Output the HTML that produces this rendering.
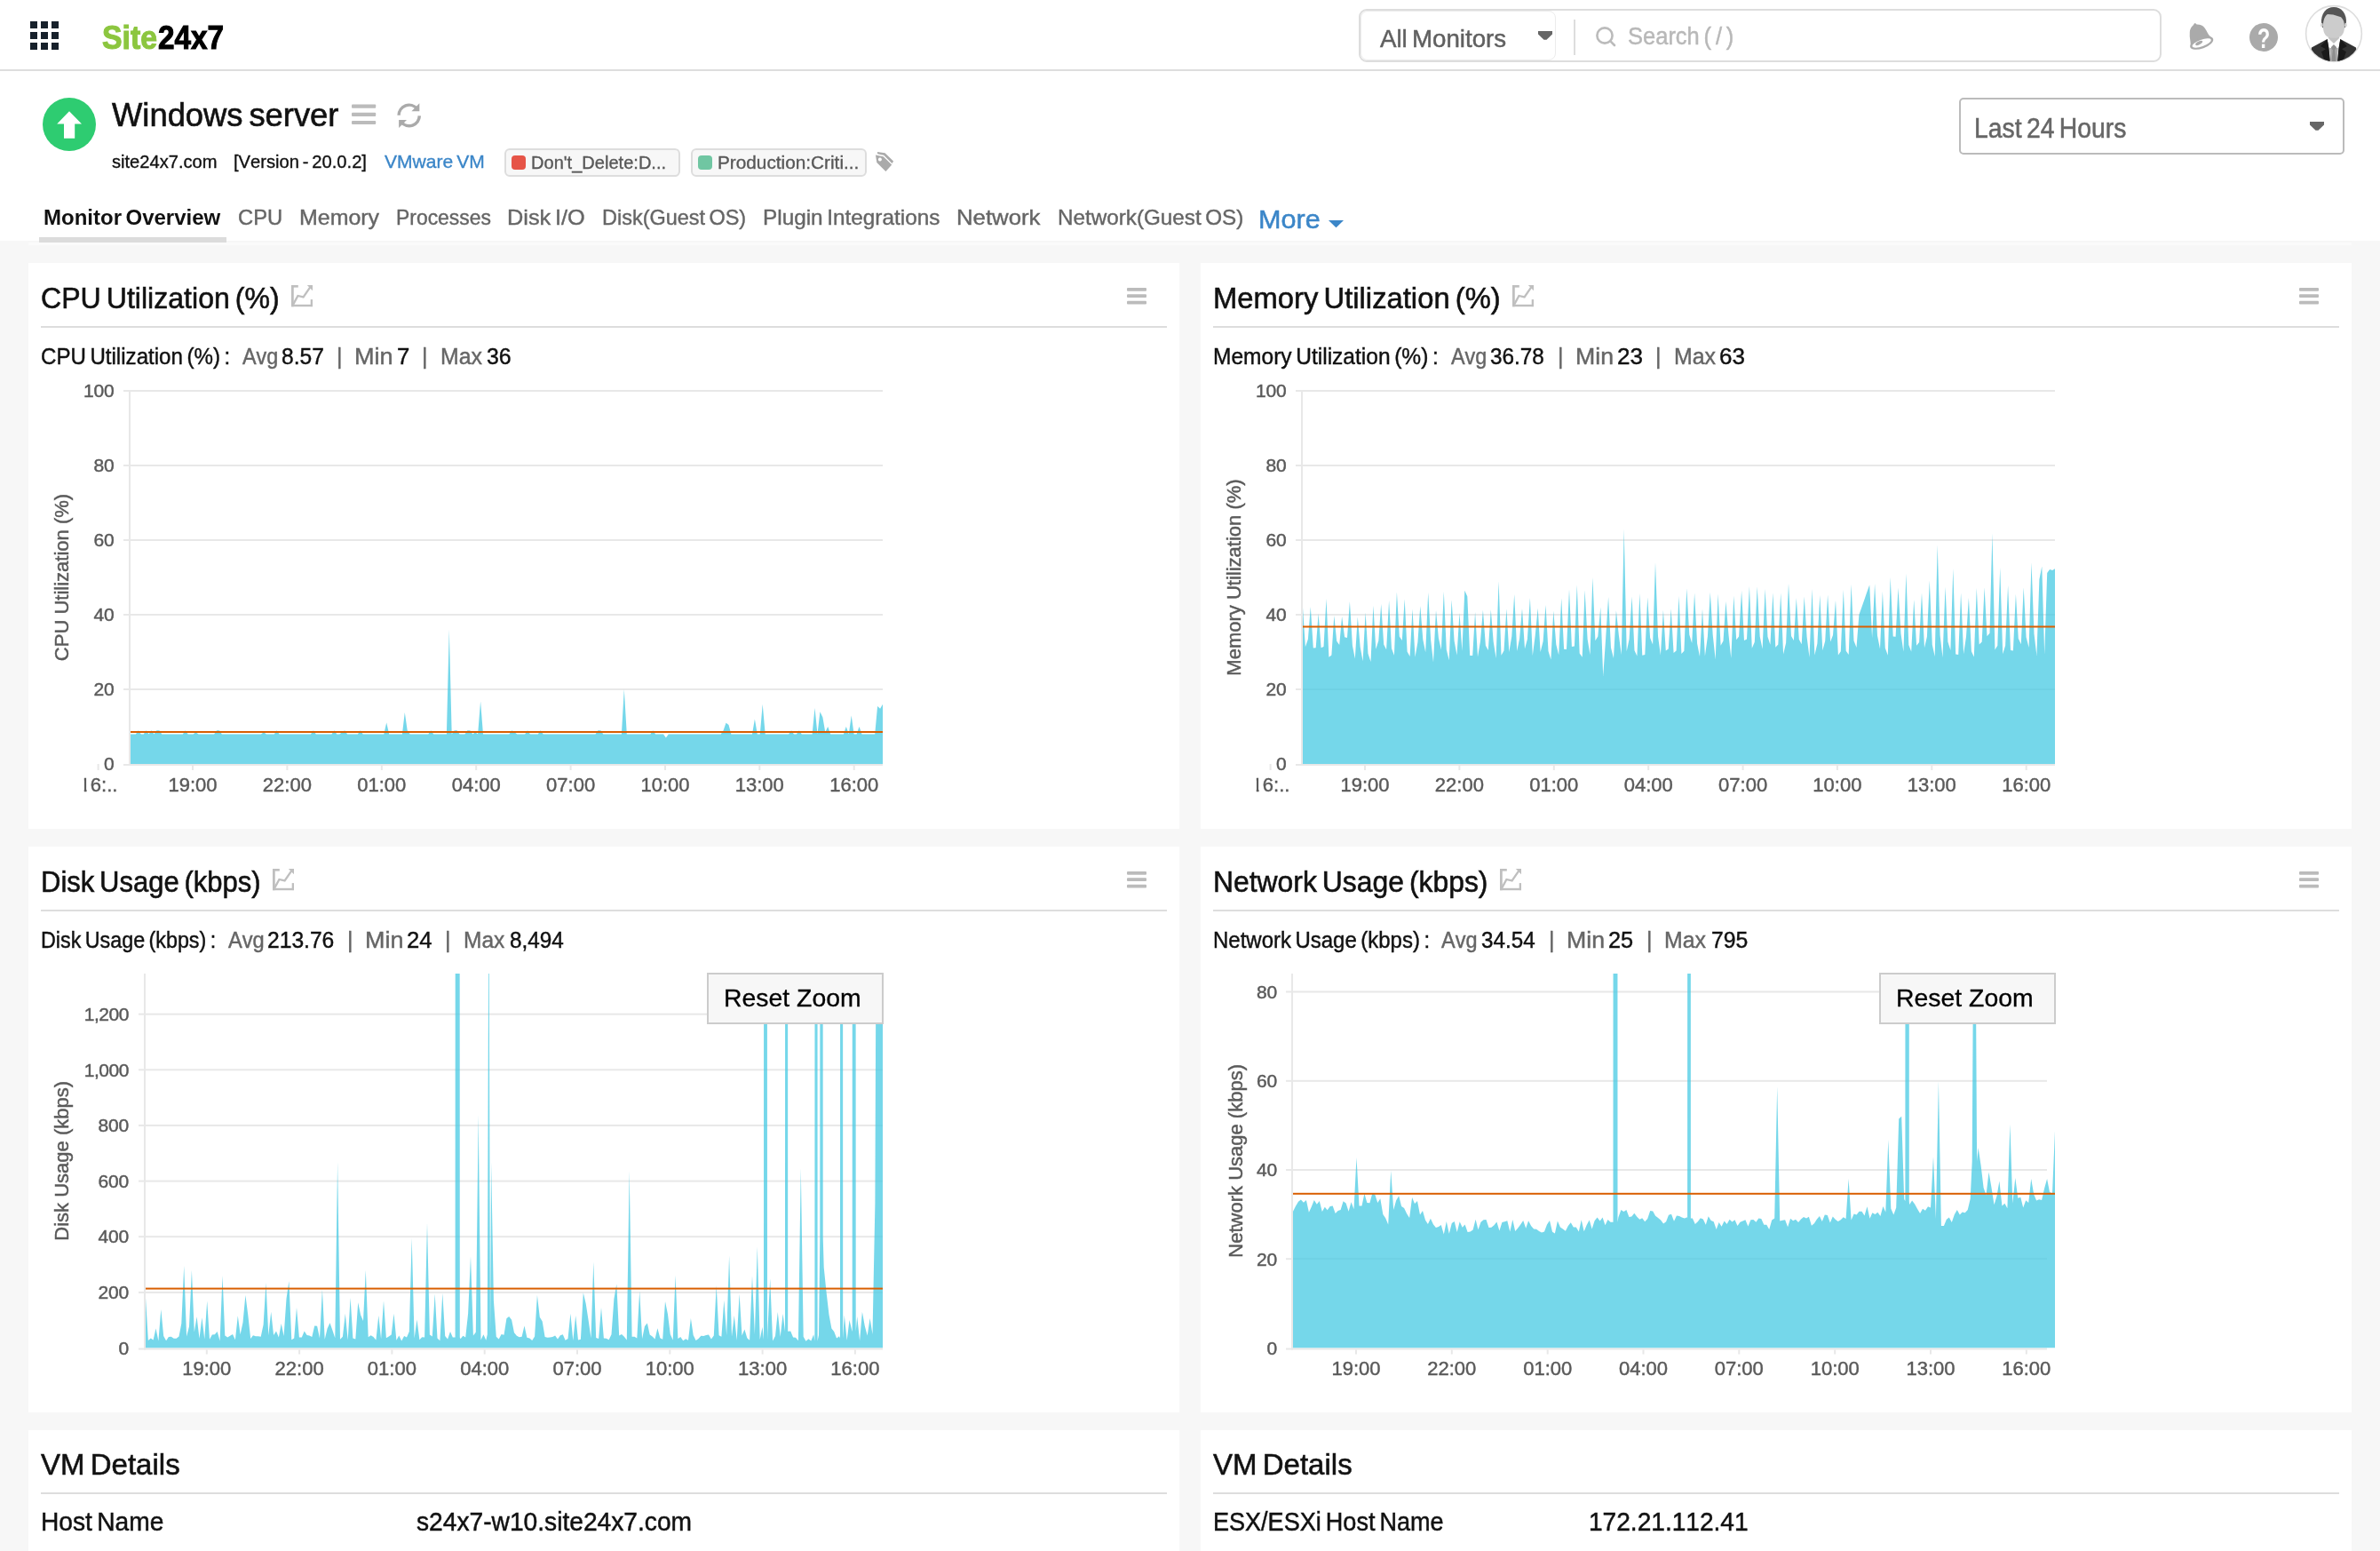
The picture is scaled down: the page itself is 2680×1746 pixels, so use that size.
<!DOCTYPE html>
<html lang="en"><head><meta charset="utf-8"><title>Site24x7 - Windows server</title>
<style>
html,body{margin:0;padding:0;}
body{background:#f7f7f7;font-family:"Liberation Sans",sans-serif;font-kerning:none;overflow:hidden;}
#page{will-change:transform;position:relative;width:2680px;height:1746px;overflow:hidden;background:#f7f7f7;}
.t{position:absolute;white-space:nowrap;transform-origin:0 0;display:block;}
.panel{position:absolute;background:#fff;}
.hr{position:absolute;height:2px;background:#ddd;}
svg{position:absolute;overflow:visible;}
svg text{font-family:"Liberation Sans",sans-serif;font-kerning:none;}
h1,h2,h3,p{margin:0;font-weight:400;}

</style></head>
<body>
<div id="page">
<div class="" style="position:absolute;left:0px;top:0px;width:2680px;height:271px;background:#fff;"></div>
<div class="" style="position:absolute;left:32px;top:273px;width:2616px;height:3px;background:#fbfbfb;"></div>
<div class="" style="position:absolute;left:0px;top:78px;width:2680px;height:2px;background:#ddd;"></div>
<svg style="left:34px;top:24px" width="32" height="32" fill="#17212b"><rect x="0" y="0" width="8" height="8"/><rect x="12" y="0" width="8" height="8"/><rect x="24" y="0" width="8" height="8"/><rect x="0" y="12" width="8" height="8"/><rect x="12" y="12" width="8" height="8"/><rect x="24" y="12" width="8" height="8"/><rect x="0" y="24" width="8" height="8"/><rect x="12" y="24" width="8" height="8"/><rect x="24" y="24" width="8" height="8"/></svg>
<span class="t " style="left:114.53px;top:24px;font-size:37px;line-height:37px;color:#8cc63f;word-spacing:-3.33px;-webkit-text-stroke:1.1px #8cc63f;font-weight:700;transform:scaleX(0.9126);">Site</span>
<span class="t " style="left:177.75px;top:24px;font-size:37px;line-height:37px;color:#000;word-spacing:-3.33px;-webkit-text-stroke:1.1px #000;font-weight:700;transform:scaleX(0.8992);">24x7</span>
<div class="" style="position:absolute;left:1530px;top:10px;width:900px;height:56px;border:2px solid #ddd;border-radius:9px;background:#fff;"></div>
<div class="" style="position:absolute;left:1532px;top:12px;width:218px;height:54px;border:1px solid #ececec;border-radius:8px;"></div>
<span class="t " style="left:1553.75px;top:30px;font-size:28px;line-height:28px;color:#606060;word-spacing:-2.52px;-webkit-text-stroke:0.48px #606060;transform:scaleX(0.9890);">All Monitors</span>
<svg style="left:1732px;top:35px" width="16" height="10"><polygon points="0,0 16,0 16,3.5 9.5,9.75 6.5,9.75 0,3.5" fill="#666"/></svg>
<div class="" style="position:absolute;left:1772px;top:22px;width:2px;height:40px;background:#ddd;"></div>
<svg style="left:1795px;top:28px" width="26" height="26" fill="none" stroke="#bbb" stroke-width="2.6" stroke-linecap="round"><circle cx="12" cy="12" r="8.6"/><line x1="18.2" y1="18.2" x2="23" y2="23"/></svg>
<span class="t " style="left:1833.24px;top:27px;font-size:28px;line-height:28px;color:#b8b8b8;word-spacing:-2.52px;-webkit-text-stroke:0.48px #b8b8b8;transform:scaleX(0.9108);">Search ( / )</span>
<svg style="left:2460px;top:20px" width="40" height="40" viewBox="2460 20 40 40">
<path d="M2471.8 26 Q2473 26.6 2473.6 27.6 Q2479.5 27.4 2482.8 31.8 Q2484.6 34.4 2486 37.3 Q2487 39.6 2488.6 40.8 L2492 43.3 L2467 54 Q2466.8 50 2466.4 46 Q2465.4 40 2465.8 36 Q2466.2 31 2470 28 Q2470.4 26.6 2471.8 26Z" fill="#aaa"/>
<g transform="translate(2479.2 48.5) rotate(-20)"><ellipse rx="13.7" ry="6" fill="#aaa"/><ellipse rx="11.3" ry="3.7" fill="#fff"/></g>
<g transform="translate(2476.2 48.4) rotate(-28)"><ellipse rx="4.4" ry="1.8" fill="#aaa"/></g>
</svg>
<div class="" style="position:absolute;left:2533px;top:26px;width:32px;height:32px;background:#aaa;border-radius:50%;"></div>
<span class="t " style="left:2542.43px;top:27px;font-size:32px;line-height:32px;color:#fff;word-spacing:-2.88px;font-weight:700;transform:scaleX(0.7269);">?</span>
<svg style="left:2590px;top:0px" width="80" height="76" viewBox="0 0 80 76">
<defs><clipPath id="avc"><circle cx="38" cy="38" r="31"/></clipPath></defs>
<circle cx="38" cy="38" r="31.4" fill="#fff" stroke="#ddd" stroke-width="1.6"/>
<g clip-path="url(#avc)">
<path d="M24.01 27.44 C23.03 14.70 29.40 8.08 37.97 8.08 C46.55 8.08 52.92 14.70 51.94 27.44 L50.47 31.36 L25.48 31.36Z" fill="#555"/>
<ellipse cx="24.35" cy="28.17" rx="1.37" ry="2.35" fill="#d8d8d8"/><ellipse cx="51.59" cy="28.17" rx="1.37" ry="2.35" fill="#d8d8d8"/>
<polygon points="31.85,39.20 44.10,39.20 44.10,43.12 37.97,49.00 31.85,43.12" fill="#c2c2c2"/>
<path d="M25.97 29.40 C25.97 23.03 27.44 18.62 30.87 15.92 L37.24 16.41 L46.06 19.35 C49.00 22.05 49.98 25.48 49.98 29.40 C50.07 39.20 45.81 42.87 37.97 42.87 C30.13 42.87 25.87 39.20 25.97 29.40Z" fill="#ccc"/>
<polygon points="12.98,53.41 30.62,44.10 32.34,53.90 34.30,73.49 9.80,73.49" fill="#333"/>
<polygon points="62.96,53.41 45.32,44.10 43.61,53.90 41.65,73.49 66.14,73.49" fill="#333"/>
<polygon points="30.62,44.10 32.34,53.90 34.30,73.49 29.40,73.49 24.01,58.30 28.91,55.37 23.03,51.94" fill="#1a1a1a"/>
<polygon points="45.32,44.10 43.61,53.90 41.65,73.49 46.55,73.49 51.94,58.30 47.04,55.37 52.92,51.94" fill="#1a1a1a"/>
<polygon points="33.32,53.90 42.63,53.90 41.89,73.49 34.05,73.49" fill="#aaa"/>
<polygon points="37.97,49.98 41.16,53.16 39.20,56.34 40.91,73.49 35.03,73.49 36.75,56.34 34.79,53.16" fill="#8e8e8e"/>
</g></svg>
<div class="" style="position:absolute;left:48px;top:110px;width:60px;height:60px;background:#2ecc71;border-radius:50%;"></div>
<svg style="left:48px;top:110px" width="60" height="60"><polygon points="30,15.3 44,29.4 36.2,29.4 36.2,45.8 24,45.8 24,29.4 16.2,29.4" fill="#fff"/></svg>
<h1 class="t " style="left:126.44px;top:111px;font-size:37px;line-height:37px;color:#111;word-spacing:-3.33px;-webkit-text-stroke:0.63px #111;transform:scaleX(0.9831);">Windows server</h1>
<svg style="left:396px;top:117px" width="28" height="24" fill="#bbb"><rect x="0" y="0.5" width="27.2" height="4.2" rx="1"/><rect x="0" y="9.7" width="27.2" height="4.2" rx="1"/><rect x="0" y="18.9" width="27.2" height="4.2" rx="1"/></svg>
<svg style="left:445px;top:114px" width="32" height="32" viewBox="445 114 32 32">
<path d="M449.1 129.8 A11.6 11.6 0 0 1 469.6 122.4" fill="none" stroke="#aaa" stroke-width="3.5"/>
<polygon points="472.3,116.2 472.3,125.3 463.4,125.3" fill="#aaa"/>
<path d="M472.3 130.4 A11.6 11.6 0 0 1 451.9 137.7" fill="none" stroke="#aaa" stroke-width="3.5"/>
<polygon points="449.1,143.9 449.1,134.9 458,134.9" fill="#aaa"/>
</svg>
<span class="t " style="left:125.64px;top:171px;font-size:21px;line-height:21px;color:#111;word-spacing:-1.89px;-webkit-text-stroke:0.36px #111;transform:scaleX(0.9577);">site24x7.com</span>
<span class="t " style="left:262.76px;top:171px;font-size:21px;line-height:21px;color:#111;word-spacing:-1.89px;-webkit-text-stroke:0.36px #111;transform:scaleX(0.9605);">[Version - 20.0.2]</span>
<span class="t " style="left:432.51px;top:171px;font-size:21px;line-height:21px;color:#3b86c8;word-spacing:-1.89px;-webkit-text-stroke:0.36px #3b86c8;transform:scaleX(1.0023);">VMware VM</span>
<div class="" style="position:absolute;left:568px;top:167px;width:194px;height:28px;border:2px solid #ddd;border-radius:6px;background:#f7f7f7;"></div>
<div class="" style="position:absolute;left:576px;top:175px;width:16px;height:16px;background:#e65447;border-radius:4px;"></div>
<span class="t " style="left:597.85px;top:172px;font-size:21px;line-height:21px;color:#585858;word-spacing:-1.89px;-webkit-text-stroke:0.36px #585858;transform:scaleX(0.9549);">Don't_Delete:D...</span>
<div class="" style="position:absolute;left:778px;top:167px;width:194px;height:28px;border:2px solid #ddd;border-radius:6px;background:#f7f7f7;"></div>
<div class="" style="position:absolute;left:786px;top:175px;width:16px;height:16px;background:#70c6a2;border-radius:4px;"></div>
<span class="t " style="left:807.60px;top:172px;font-size:21px;line-height:21px;color:#585858;word-spacing:-1.89px;-webkit-text-stroke:0.36px #585858;transform:scaleX(0.9891);">Production:Criti...</span>
<svg style="left:984px;top:168px" width="26" height="28" viewBox="984 168 26 28" fill="#aaa">
<path fill-rule="evenodd" d="M985.97 174.5 L994.67 176.2 L1004.2 185.5 L997.4 192.9 L987.3 182.9Z M990.9 177.6 a2 2 0 1 0 0.01 0Z"/>
<polygon points="988,170.9 996.55,172.2 1006.1,181.6 1004.5,184.1 995.25,174.8 988.1,173.3"/>
</svg>
<span class="t " style="left:49.19px;top:233px;font-size:24px;line-height:24px;color:#111;word-spacing:-2.16px;font-weight:700;transform:scaleX(1.0002);">Monitor Overview</span>
<span class="t " style="left:268.09px;top:233px;font-size:24px;line-height:24px;color:#666;word-spacing:-2.16px;-webkit-text-stroke:0.41px #666;transform:scaleX(0.9895);">CPU</span>
<span class="t " style="left:336.55px;top:233px;font-size:24px;line-height:24px;color:#666;word-spacing:-2.16px;-webkit-text-stroke:0.41px #666;transform:scaleX(1.0395);">Memory</span>
<span class="t " style="left:445.92px;top:233px;font-size:24px;line-height:24px;color:#666;word-spacing:-2.16px;-webkit-text-stroke:0.41px #666;transform:scaleX(0.9542);">Processes</span>
<span class="t " style="left:571.42px;top:233px;font-size:24px;line-height:24px;color:#666;word-spacing:-2.16px;-webkit-text-stroke:0.41px #666;transform:scaleX(1.0542);">Disk I/O</span>
<span class="t " style="left:677.77px;top:233px;font-size:24px;line-height:24px;color:#666;word-spacing:-2.16px;-webkit-text-stroke:0.41px #666;transform:scaleX(0.9778);">Disk(Guest OS)</span>
<span class="t " style="left:858.50px;top:233px;font-size:24px;line-height:24px;color:#666;word-spacing:-2.16px;-webkit-text-stroke:0.41px #666;transform:scaleX(1.0139);">Plugin Integrations</span>
<span class="t " style="left:1076.89px;top:233px;font-size:24px;line-height:24px;color:#666;word-spacing:-2.16px;-webkit-text-stroke:0.41px #666;transform:scaleX(1.0722);">Network</span>
<span class="t " style="left:1190.51px;top:233px;font-size:24px;line-height:24px;color:#666;word-spacing:-2.16px;-webkit-text-stroke:0.41px #666;transform:scaleX(1.0100);">Network(Guest OS)</span>
<div class="" style="position:absolute;left:44px;top:267px;width:211px;height:6px;background:#dcdcdc;"></div>
<span class="t " style="left:1416.99px;top:233px;font-size:29px;line-height:29px;color:#3b86c8;word-spacing:-2.61px;-webkit-text-stroke:0.49px #3b86c8;transform:scaleX(1.0544);">More</span>
<svg style="left:1496px;top:248px" width="18" height="9"><polygon points="0,0 17,0 8.5,8.3" fill="#3b86c8"/></svg>
<div class="" style="position:absolute;left:2206px;top:110px;width:430px;height:60px;border:2px solid #bbb;border-radius:5px;background:#fff;"></div>
<span class="t " style="left:2222.88px;top:129px;font-size:31px;line-height:31px;color:#666;word-spacing:-2.79px;-webkit-text-stroke:0.53px #666;transform:scaleX(0.9143);">Last 24 Hours</span>
<svg style="left:2601px;top:137px" width="16" height="10"><polygon points="0,0 16,0 16,3.5 9.5,9.75 6.5,9.75 0,3.5" fill="#666"/></svg>
<section class="panel" style="left:32px;top:296px;width:1296px;height:637px"></section>
<h2 class="t " style="left:45.87px;top:318px;font-size:34px;line-height:34px;color:#111;word-spacing:-3.06px;-webkit-text-stroke:0.58px #111;transform:scaleX(0.9435);">CPU Utilization (%)</h2>
<svg style="left:328px;top:321px" width="25" height="25" fill="#bfbfbf">
<rect x="0" y="0" width="2.75" height="24.2"/><rect x="0" y="0" width="7.8" height="2.6"/>
<rect x="0" y="21.8" width="24" height="2.4"/><rect x="21.7" y="16.1" width="2.3" height="8"/>
<polyline points="2.2,21.6 7.4,12 13.6,13.4 21.2,2.4" fill="none" stroke="#bfbfbf" stroke-width="2.3" stroke-linejoin="miter"/>
<polygon points="17.8,0 24,0 24,6.3"/></svg>
<svg style="left:1269px;top:324px" width="23" height="20" fill="#bbb"><rect x="0" y="0" width="22" height="3.8" rx="1"/><rect x="0" y="7.3" width="22" height="3.8" rx="1"/><rect x="0" y="14.7" width="22" height="3.7" rx="1"/></svg>
<div class="hr" style="left:46px;top:367px;width:1268px"></div>
<span class="t " style="left:45.88px;top:389px;font-size:25px;line-height:25px;color:#111;word-spacing:-2.25px;-webkit-text-stroke:0.43px #111;transform:scaleX(0.9641);">CPU Utilization (%) :</span>
<span class="t " style="left:272.95px;top:389px;font-size:25px;line-height:25px;color:#666;word-spacing:-2.25px;-webkit-text-stroke:0.43px #666;transform:scaleX(0.9368);">Avg</span>
<span class="t " style="left:316.53px;top:389px;font-size:25px;line-height:25px;color:#111;word-spacing:-2.25px;-webkit-text-stroke:0.43px #111;transform:scaleX(0.9846);">8.57</span>
<span class="t " style="left:378.80px;top:389px;font-size:25px;line-height:25px;color:#666;word-spacing:-2.25px;-webkit-text-stroke:0.43px #666;transform:scaleX(0.9870);">|</span>
<span class="t " style="left:399.28px;top:389px;font-size:25px;line-height:25px;color:#666;word-spacing:-2.25px;-webkit-text-stroke:0.43px #666;transform:scaleX(1.0844);">Min</span>
<span class="t " style="left:446.68px;top:389px;font-size:25px;line-height:25px;color:#111;word-spacing:-2.25px;-webkit-text-stroke:0.43px #111;transform:scaleX(1.0295);">7</span>
<span class="t " style="left:474.80px;top:389px;font-size:25px;line-height:25px;color:#666;word-spacing:-2.25px;-webkit-text-stroke:0.43px #666;transform:scaleX(0.9870);">|</span>
<span class="t " style="left:495.96px;top:389px;font-size:25px;line-height:25px;color:#666;word-spacing:-2.25px;-webkit-text-stroke:0.43px #666;transform:scaleX(0.9931);">Max</span>
<span class="t " style="left:548.45px;top:389px;font-size:25px;line-height:25px;color:#111;word-spacing:-2.25px;-webkit-text-stroke:0.43px #111;transform:scaleX(0.9939);">36</span>
<section class="panel" style="left:1352px;top:296px;width:1296px;height:637px"></section>
<h2 class="t " style="left:1365.91px;top:318px;font-size:34px;line-height:34px;color:#111;word-spacing:-3.06px;-webkit-text-stroke:0.58px #111;transform:scaleX(0.9640);">Memory Utilization (%)</h2>
<svg style="left:1703px;top:321px" width="25" height="25" fill="#bfbfbf">
<rect x="0" y="0" width="2.75" height="24.2"/><rect x="0" y="0" width="7.8" height="2.6"/>
<rect x="0" y="21.8" width="24" height="2.4"/><rect x="21.7" y="16.1" width="2.3" height="8"/>
<polyline points="2.2,21.6 7.4,12 13.6,13.4 21.2,2.4" fill="none" stroke="#bfbfbf" stroke-width="2.3" stroke-linejoin="miter"/>
<polygon points="17.8,0 24,0 24,6.3"/></svg>
<svg style="left:2589px;top:324px" width="23" height="20" fill="#bbb"><rect x="0" y="0" width="22" height="3.8" rx="1"/><rect x="0" y="7.3" width="22" height="3.8" rx="1"/><rect x="0" y="14.7" width="22" height="3.7" rx="1"/></svg>
<div class="hr" style="left:1366px;top:367px;width:1268px"></div>
<span class="t " style="left:1366.09px;top:389px;font-size:25px;line-height:25px;color:#111;word-spacing:-2.25px;-webkit-text-stroke:0.43px #111;transform:scaleX(0.9814);">Memory Utilization (%) :</span>
<span class="t " style="left:1633.75px;top:389px;font-size:25px;line-height:25px;color:#666;word-spacing:-2.25px;-webkit-text-stroke:0.43px #666;transform:scaleX(0.9368);">Avg</span>
<span class="t " style="left:1677.87px;top:389px;font-size:25px;line-height:25px;color:#111;word-spacing:-2.25px;-webkit-text-stroke:0.43px #111;transform:scaleX(0.9715);">36.78</span>
<span class="t " style="left:1753.80px;top:389px;font-size:25px;line-height:25px;color:#666;word-spacing:-2.25px;-webkit-text-stroke:0.43px #666;transform:scaleX(0.9870);">|</span>
<span class="t " style="left:1774.31px;top:389px;font-size:25px;line-height:25px;color:#666;word-spacing:-2.25px;-webkit-text-stroke:0.43px #666;transform:scaleX(1.0680);">Min</span>
<span class="t " style="left:1820.69px;top:389px;font-size:25px;line-height:25px;color:#111;word-spacing:-2.25px;-webkit-text-stroke:0.43px #111;transform:scaleX(1.0412);">23</span>
<span class="t " style="left:1864.40px;top:389px;font-size:25px;line-height:25px;color:#666;word-spacing:-2.25px;-webkit-text-stroke:0.43px #666;transform:scaleX(0.9870);">|</span>
<span class="t " style="left:1884.76px;top:389px;font-size:25px;line-height:25px;color:#666;word-spacing:-2.25px;-webkit-text-stroke:0.43px #666;transform:scaleX(0.9953);">Max</span>
<span class="t " style="left:1936.28px;top:389px;font-size:25px;line-height:25px;color:#111;word-spacing:-2.25px;-webkit-text-stroke:0.43px #111;transform:scaleX(1.0378);">63</span>
<section class="panel" style="left:32px;top:953px;width:1296px;height:637px"></section>
<h2 class="t " style="left:46.06px;top:975px;font-size:34px;line-height:34px;color:#111;word-spacing:-3.06px;-webkit-text-stroke:0.58px #111;transform:scaleX(0.9118);">Disk Usage (kbps)</h2>
<svg style="left:307px;top:978px" width="25" height="25" fill="#bfbfbf">
<rect x="0" y="0" width="2.75" height="24.2"/><rect x="0" y="0" width="7.8" height="2.6"/>
<rect x="0" y="21.8" width="24" height="2.4"/><rect x="21.7" y="16.1" width="2.3" height="8"/>
<polyline points="2.2,21.6 7.4,12 13.6,13.4 21.2,2.4" fill="none" stroke="#bfbfbf" stroke-width="2.3" stroke-linejoin="miter"/>
<polygon points="17.8,0 24,0 24,6.3"/></svg>
<svg style="left:1269px;top:981px" width="23" height="20" fill="#bbb"><rect x="0" y="0" width="22" height="3.8" rx="1"/><rect x="0" y="7.3" width="22" height="3.8" rx="1"/><rect x="0" y="14.7" width="22" height="3.7" rx="1"/></svg>
<div class="hr" style="left:46px;top:1024px;width:1268px"></div>
<span class="t " style="left:46.19px;top:1046px;font-size:25px;line-height:25px;color:#111;word-spacing:-2.25px;-webkit-text-stroke:0.43px #111;transform:scaleX(0.9327);">Disk Usage (kbps) :</span>
<span class="t " style="left:256.95px;top:1046px;font-size:25px;line-height:25px;color:#666;word-spacing:-2.25px;-webkit-text-stroke:0.43px #666;transform:scaleX(0.9464);">Avg</span>
<span class="t " style="left:300.76px;top:1046px;font-size:25px;line-height:25px;color:#111;word-spacing:-2.25px;-webkit-text-stroke:0.43px #111;transform:scaleX(0.9850);">213.76</span>
<span class="t " style="left:390.80px;top:1046px;font-size:25px;line-height:25px;color:#666;word-spacing:-2.25px;-webkit-text-stroke:0.43px #666;transform:scaleX(0.9870);">|</span>
<span class="t " style="left:410.99px;top:1046px;font-size:25px;line-height:25px;color:#666;word-spacing:-2.25px;-webkit-text-stroke:0.43px #666;transform:scaleX(1.0762);">Min</span>
<span class="t " style="left:458.11px;top:1046px;font-size:25px;line-height:25px;color:#111;word-spacing:-2.25px;-webkit-text-stroke:0.43px #111;transform:scaleX(1.0264);">24</span>
<span class="t " style="left:500.80px;top:1046px;font-size:25px;line-height:25px;color:#666;word-spacing:-2.25px;-webkit-text-stroke:0.43px #666;transform:scaleX(0.9870);">|</span>
<span class="t " style="left:521.99px;top:1046px;font-size:25px;line-height:25px;color:#666;word-spacing:-2.25px;-webkit-text-stroke:0.43px #666;transform:scaleX(0.9797);">Max</span>
<span class="t " style="left:573.64px;top:1046px;font-size:25px;line-height:25px;color:#111;word-spacing:-2.25px;-webkit-text-stroke:0.43px #111;transform:scaleX(0.9730);">8,494</span>
<section class="panel" style="left:1352px;top:953px;width:1296px;height:637px"></section>
<h2 class="t " style="left:1365.99px;top:975px;font-size:34px;line-height:34px;color:#111;word-spacing:-3.06px;-webkit-text-stroke:0.58px #111;transform:scaleX(0.9372);">Network Usage (kbps)</h2>
<svg style="left:1689px;top:978px" width="25" height="25" fill="#bfbfbf">
<rect x="0" y="0" width="2.75" height="24.2"/><rect x="0" y="0" width="7.8" height="2.6"/>
<rect x="0" y="21.8" width="24" height="2.4"/><rect x="21.7" y="16.1" width="2.3" height="8"/>
<polyline points="2.2,21.6 7.4,12 13.6,13.4 21.2,2.4" fill="none" stroke="#bfbfbf" stroke-width="2.3" stroke-linejoin="miter"/>
<polygon points="17.8,0 24,0 24,6.3"/></svg>
<svg style="left:2589px;top:981px" width="23" height="20" fill="#bbb"><rect x="0" y="0" width="22" height="3.8" rx="1"/><rect x="0" y="7.3" width="22" height="3.8" rx="1"/><rect x="0" y="14.7" width="22" height="3.7" rx="1"/></svg>
<div class="hr" style="left:1366px;top:1024px;width:1268px"></div>
<span class="t " style="left:1366.13px;top:1046px;font-size:25px;line-height:25px;color:#111;word-spacing:-2.25px;-webkit-text-stroke:0.43px #111;transform:scaleX(0.9592);">Network Usage (kbps) :</span>
<span class="t " style="left:1623.45px;top:1046px;font-size:25px;line-height:25px;color:#666;word-spacing:-2.25px;-webkit-text-stroke:0.43px #666;transform:scaleX(0.9392);">Avg</span>
<span class="t " style="left:1668.08px;top:1046px;font-size:25px;line-height:25px;color:#111;word-spacing:-2.25px;-webkit-text-stroke:0.43px #111;transform:scaleX(0.9692);">34.54</span>
<span class="t " style="left:1743.80px;top:1046px;font-size:25px;line-height:25px;color:#666;word-spacing:-2.25px;-webkit-text-stroke:0.43px #666;transform:scaleX(0.9870);">|</span>
<span class="t " style="left:1764.01px;top:1046px;font-size:25px;line-height:25px;color:#666;word-spacing:-2.25px;-webkit-text-stroke:0.43px #666;transform:scaleX(1.0680);">Min</span>
<span class="t " style="left:1811.13px;top:1046px;font-size:25px;line-height:25px;color:#111;word-spacing:-2.25px;-webkit-text-stroke:0.43px #111;transform:scaleX(1.0117);">25</span>
<span class="t " style="left:1853.60px;top:1046px;font-size:25px;line-height:25px;color:#666;word-spacing:-2.25px;-webkit-text-stroke:0.43px #666;transform:scaleX(0.9870);">|</span>
<span class="t " style="left:1874.46px;top:1046px;font-size:25px;line-height:25px;color:#666;word-spacing:-2.25px;-webkit-text-stroke:0.43px #666;transform:scaleX(0.9953);">Max</span>
<span class="t " style="left:1926.73px;top:1046px;font-size:25px;line-height:25px;color:#111;word-spacing:-2.25px;-webkit-text-stroke:0.43px #111;transform:scaleX(0.9904);">795</span>
<section class="panel" style="left:32px;top:1610px;width:1296px;height:200px"></section>
<section class="panel" style="left:1352px;top:1610px;width:1296px;height:200px"></section>
<h2 class="t " style="left:46.35px;top:1631px;font-size:34px;line-height:34px;color:#111;word-spacing:-3.06px;-webkit-text-stroke:0.58px #111;transform:scaleX(0.9710);">VM Details</h2>
<h2 class="t " style="left:1366.35px;top:1631px;font-size:34px;line-height:34px;color:#111;word-spacing:-3.06px;-webkit-text-stroke:0.58px #111;transform:scaleX(0.9710);">VM Details</h2>
<div class="hr" style="left:46px;top:1680px;width:1268px"></div>
<div class="hr" style="left:1366px;top:1680px;width:1268px"></div>
<span class="t " style="left:45.89px;top:1699px;font-size:29px;line-height:29px;color:#111;word-spacing:-2.61px;-webkit-text-stroke:0.49px #111;transform:scaleX(0.9714);">Host Name</span>
<span class="t " style="left:468.62px;top:1699px;font-size:29px;line-height:29px;color:#111;word-spacing:-2.61px;-webkit-text-stroke:0.49px #111;transform:scaleX(0.9714);">s24x7-w10.site24x7.com</span>
<span class="t " style="left:1365.98px;top:1699px;font-size:29px;line-height:29px;color:#111;word-spacing:-2.61px;-webkit-text-stroke:0.49px #111;transform:scaleX(0.9324);">ESX/ESXi Host Name</span>
<span class="t " style="left:1789.16px;top:1699px;font-size:29px;line-height:29px;color:#111;word-spacing:-2.61px;-webkit-text-stroke:0.49px #111;transform:scaleX(0.9685);">172.21.112.41</span>
<svg style="left:32px;top:296px" width="1296" height="637" viewBox="32 296 1296 637">
<defs><clipPath id="clip146"><rect x="146" y="440" width="848" height="420"/></clipPath></defs>
<rect x="139" y="860.0" width="855" height="2" fill="#e8e8e8"/>
<rect x="139" y="775.0" width="855" height="2" fill="#e8e8e8"/>
<rect x="139" y="691.0" width="855" height="2" fill="#e8e8e8"/>
<rect x="139" y="607.0" width="855" height="2" fill="#e8e8e8"/>
<rect x="139" y="523.0" width="855" height="2" fill="#e8e8e8"/>
<rect x="139" y="439.0" width="855" height="2" fill="#e8e8e8"/>
<rect x="145" y="440" width="2" height="422" fill="#e8e8e8"/>
<rect x="216.0" y="862" width="2" height="5" fill="#e8e8e8"/>
<rect x="322.4" y="862" width="2" height="5" fill="#e8e8e8"/>
<rect x="428.8" y="862" width="2" height="5" fill="#e8e8e8"/>
<rect x="535.2" y="862" width="2" height="5" fill="#e8e8e8"/>
<rect x="641.6" y="862" width="2" height="5" fill="#e8e8e8"/>
<rect x="748.0" y="862" width="2" height="5" fill="#e8e8e8"/>
<rect x="854.3" y="862" width="2" height="5" fill="#e8e8e8"/>
<rect x="960.7" y="862" width="2" height="5" fill="#e8e8e8"/>
<g clip-path="url(#clip146)"><polygon points="147.0,860 147.0,826.4 149.9,826.4 152.9,826.4 155.8,822.2 158.8,826.4 161.7,826.4 164.6,822.2 167.6,826.4 170.5,822.2 173.5,826.4 176.4,822.2 179.4,822.2 182.3,826.4 185.2,826.4 188.2,826.4 191.1,826.4 194.1,826.4 197.0,826.4 199.9,826.4 202.9,826.4 205.8,826.4 208.8,822.2 211.7,826.4 214.6,826.4 217.6,826.4 220.5,824.3 223.5,826.4 226.4,826.4 229.3,826.4 232.3,826.4 235.2,826.4 238.2,826.4 241.1,826.4 244.1,822.2 247.0,822.2 249.9,826.4 252.9,826.4 255.8,826.4 258.8,826.4 261.7,826.4 264.6,826.4 267.6,826.4 270.5,826.4 273.5,826.4 276.4,826.4 279.3,826.4 282.3,826.4 285.2,826.4 288.2,826.4 291.1,826.4 294.0,826.4 297.0,824.3 299.9,826.4 302.9,826.4 305.8,826.4 308.8,826.4 311.7,822.2 314.6,826.4 317.6,826.4 320.5,826.4 323.5,826.4 326.4,826.4 329.3,826.4 332.3,826.4 335.2,826.4 338.2,826.4 341.1,826.4 344.0,826.4 347.0,826.4 349.9,826.4 352.9,822.2 355.8,826.4 358.8,826.4 361.7,826.4 364.6,826.4 367.6,826.4 370.5,826.4 373.5,826.4 376.4,822.2 379.3,826.4 382.3,826.4 385.2,824.3 388.2,822.2 391.1,826.4 394.0,826.4 397.0,826.4 399.9,826.4 402.9,826.4 405.8,822.2 408.7,826.4 411.7,826.4 414.6,826.4 417.6,826.4 420.5,826.4 423.5,826.4 426.4,826.4 429.3,826.4 432.3,826.4 435.2,813.4 438.2,826.4 441.1,826.4 444.0,826.4 447.0,826.4 449.9,826.4 452.9,826.4 455.8,802.0 458.7,822.2 461.7,826.4 464.6,826.4 467.6,826.4 470.5,826.4 473.4,826.4 476.4,826.4 479.3,826.4 482.3,826.4 485.2,822.2 488.2,826.4 491.1,826.4 494.0,826.4 497.0,826.4 499.9,826.4 502.9,826.4 505.8,708.8 508.7,826.4 511.7,822.2 514.6,822.2 517.6,826.4 520.5,826.4 523.4,826.4 526.4,822.2 529.3,822.2 532.3,826.4 535.2,824.3 538.1,826.4 541.1,789.4 544.0,826.4 547.0,826.4 549.9,826.4 552.9,826.4 555.8,826.4 558.7,826.4 561.7,826.4 564.6,826.4 567.6,826.4 570.5,826.4 573.4,826.4 576.4,822.2 579.3,824.3 582.3,826.4 585.2,826.4 588.1,826.4 591.1,826.4 594.0,822.2 597.0,826.4 599.9,826.4 602.9,826.4 605.8,826.4 608.7,822.2 611.7,826.4 614.6,826.4 617.6,826.4 620.5,826.4 623.4,826.4 626.4,826.4 629.3,826.4 632.3,826.4 635.2,826.4 638.1,826.4 641.1,826.4 644.0,826.4 647.0,826.4 649.9,826.4 652.8,826.4 655.8,826.4 658.7,826.4 661.7,826.4 664.6,826.4 667.6,826.4 670.5,826.4 673.4,822.2 676.4,822.2 679.3,826.4 682.3,826.4 685.2,826.4 688.1,826.4 691.1,826.4 694.0,826.4 697.0,826.4 699.9,826.4 702.8,776.0 705.8,826.4 708.7,826.4 711.7,826.4 714.6,826.4 717.5,826.4 720.5,826.4 723.4,826.4 726.4,826.4 729.3,826.4 732.3,826.4 735.2,822.2 738.1,826.4 741.1,826.4 744.0,826.4 747.0,826.4 749.9,830.6 752.8,826.4 755.8,826.4 758.7,826.4 761.7,826.4 764.6,826.4 767.5,826.4 770.5,826.4 773.4,826.4 776.4,826.4 779.3,826.4 782.2,826.4 785.2,826.4 788.1,826.4 791.1,826.4 794.0,826.4 797.0,826.4 799.9,826.4 802.8,826.4 805.8,826.4 808.7,826.4 811.7,826.4 814.6,822.2 817.5,813.8 820.5,815.9 823.4,826.4 826.4,826.4 829.3,826.4 832.2,826.4 835.2,826.4 838.1,826.4 841.1,826.4 844.0,826.4 847.0,826.4 849.9,809.6 852.8,826.4 855.8,826.4 858.7,792.8 861.7,826.4 864.6,826.4 867.5,826.4 870.5,826.4 873.4,826.4 876.4,826.4 879.3,826.4 882.2,826.4 885.2,826.4 888.1,826.4 891.1,822.2 894.0,826.4 896.9,826.4 899.9,822.2 902.8,826.4 905.8,826.4 908.7,826.4 911.7,826.4 914.6,826.4 917.5,797.0 920.5,826.4 923.4,801.2 926.4,807.5 929.3,824.3 932.2,818.0 935.2,826.4 938.1,826.4 941.1,826.4 944.0,826.4 946.9,826.4 949.9,826.4 952.8,818.0 955.8,826.4 958.7,805.4 961.6,826.4 964.6,826.4 967.5,818.0 970.5,826.4 973.4,826.4 976.4,826.4 979.3,826.4 982.2,826.4 985.2,826.4 988.1,794.9 991.1,797.8 994.0,792.8 994.0,860" fill="#47cae3" fill-opacity="0.75"/></g>
<rect x="147" y="823.0" width="847" height="2" fill="#d95f02"/>
<g font-size="22" fill="#5a5a5a" stroke="#5a5a5a" stroke-width="0.45">
<text x="128.5" y="867.2" text-anchor="end" font-size="21" letter-spacing="-0.15">0</text>
<text x="128.5" y="783.2" text-anchor="end" font-size="21" letter-spacing="-0.15">20</text>
<text x="128.5" y="699.2" text-anchor="end" font-size="21" letter-spacing="-0.15">40</text>
<text x="128.5" y="615.2" text-anchor="end" font-size="21" letter-spacing="-0.15">60</text>
<text x="128.5" y="531.2" text-anchor="end" font-size="21" letter-spacing="-0.15">80</text>
<text x="128.5" y="447.2" text-anchor="end" font-size="21" letter-spacing="-0.15">100</text>
<text x="217.0" y="890.8" text-anchor="middle">19:00</text>
<text x="323.4" y="890.8" text-anchor="middle">22:00</text>
<text x="429.8" y="890.8" text-anchor="middle">01:00</text>
<text x="536.2" y="890.8" text-anchor="middle">04:00</text>
<text x="642.6" y="890.8" text-anchor="middle">07:00</text>
<text x="749.0" y="890.8" text-anchor="middle">10:00</text>
<text x="855.3" y="890.8" text-anchor="middle">13:00</text>
<text x="961.7" y="890.8" text-anchor="middle">16:00</text>
<text x="77" y="650.0" text-anchor="middle" transform="rotate(-90 77 650.0)">CPU Utilization (%)</text>
</g>
<rect x="109.6" y="860" width="2" height="7" fill="#e8e8e8"/><clipPath id="lc1"><rect x="94.8" y="868" width="2.7" height="30"/><rect x="101.8" y="868" width="60" height="30"/></clipPath><text clip-path="url(#lc1)" x="111" y="890.8" text-anchor="middle" font-size="22" fill="#5a5a5a" stroke="#5a5a5a" stroke-width="0.45">16:..</text>
</svg>
<svg style="left:1352px;top:296px" width="1296" height="637" viewBox="1352 296 1296 637">
<defs><clipPath id="clip1466"><rect x="1466" y="440" width="848" height="420"/></clipPath></defs>
<rect x="1459" y="860.0" width="855" height="2" fill="#e8e8e8"/>
<rect x="1459" y="775.0" width="855" height="2" fill="#e8e8e8"/>
<rect x="1459" y="691.0" width="855" height="2" fill="#e8e8e8"/>
<rect x="1459" y="607.0" width="855" height="2" fill="#e8e8e8"/>
<rect x="1459" y="523.0" width="855" height="2" fill="#e8e8e8"/>
<rect x="1459" y="439.0" width="855" height="2" fill="#e8e8e8"/>
<rect x="1465" y="440" width="2" height="422" fill="#e8e8e8"/>
<rect x="1536.0" y="862" width="2" height="5" fill="#e8e8e8"/>
<rect x="1642.4" y="862" width="2" height="5" fill="#e8e8e8"/>
<rect x="1748.8" y="862" width="2" height="5" fill="#e8e8e8"/>
<rect x="1855.2" y="862" width="2" height="5" fill="#e8e8e8"/>
<rect x="1961.6" y="862" width="2" height="5" fill="#e8e8e8"/>
<rect x="2067.9" y="862" width="2" height="5" fill="#e8e8e8"/>
<rect x="2174.3" y="862" width="2" height="5" fill="#e8e8e8"/>
<rect x="2280.7" y="862" width="2" height="5" fill="#e8e8e8"/>
<g clip-path="url(#clip1466)"><polygon points="1467.0,860 1467.0,683.9 1469.9,728.3 1472.9,719.4 1475.8,683.3 1478.8,729.5 1481.7,729.2 1484.6,690.8 1487.6,729.3 1490.5,727.9 1493.5,674.0 1496.4,739.8 1499.4,737.4 1502.3,692.9 1505.2,721.7 1508.2,725.9 1511.1,694.1 1514.1,717.3 1517.0,717.9 1519.9,677.2 1522.9,726.5 1525.8,741.5 1528.8,694.4 1531.7,728.6 1534.6,744.3 1537.6,689.4 1540.5,735.8 1543.5,745.1 1546.4,681.8 1549.3,730.7 1552.3,721.2 1555.2,680.1 1558.2,725.6 1561.1,731.2 1564.1,675.9 1567.0,730.1 1569.9,737.7 1572.9,666.6 1575.8,716.5 1578.8,721.1 1581.7,674.3 1584.6,733.6 1587.6,739.0 1590.5,685.6 1593.5,739.7 1596.4,723.1 1599.3,682.3 1602.3,720.1 1605.2,734.2 1608.2,666.9 1611.1,720.0 1614.0,745.5 1617.0,687.1 1619.9,718.3 1622.9,731.6 1625.8,665.9 1628.8,731.2 1631.7,743.2 1634.6,675.3 1637.6,721.5 1640.5,737.4 1643.5,689.9 1646.4,732.7 1649.3,664.7 1652.3,671.4 1655.2,738.0 1658.2,737.9 1661.1,689.1 1664.0,739.4 1667.0,721.7 1669.9,686.8 1672.9,726.8 1675.8,731.9 1678.8,686.3 1681.7,722.4 1684.6,741.1 1687.6,654.2 1690.5,737.8 1693.5,732.5 1696.4,685.3 1699.3,733.9 1702.3,716.3 1705.2,669.0 1708.2,732.9 1711.1,718.8 1714.0,684.9 1717.0,730.6 1719.9,719.6 1722.9,673.0 1725.8,737.9 1728.7,715.6 1731.7,684.5 1734.6,733.9 1737.6,721.9 1740.5,681.1 1743.5,732.9 1746.4,742.4 1749.3,687.4 1752.3,725.6 1755.2,737.3 1758.2,673.3 1761.1,730.8 1764.0,731.1 1767.0,663.3 1769.9,728.0 1772.9,727.4 1775.8,658.4 1778.7,735.5 1781.7,739.7 1784.6,664.3 1787.6,719.4 1790.5,736.9 1793.4,650.0 1796.4,721.3 1799.3,716.5 1802.3,683.4 1805.2,760.9 1808.2,718.1 1811.1,672.0 1814.0,729.2 1817.0,740.9 1819.9,687.3 1822.9,715.5 1825.8,736.9 1828.7,595.4 1831.7,733.2 1834.6,719.6 1837.6,671.6 1840.5,732.2 1843.4,738.6 1846.4,668.1 1849.3,737.8 1852.3,737.0 1855.2,672.3 1858.1,718.0 1861.1,725.6 1864.0,633.2 1867.0,716.3 1869.9,737.6 1872.9,686.7 1875.8,732.6 1878.7,730.4 1881.7,685.3 1884.6,734.9 1887.6,732.6 1890.5,671.1 1893.4,735.9 1896.4,732.8 1899.3,662.2 1902.3,714.5 1905.2,724.0 1908.1,667.5 1911.1,724.4 1914.0,739.1 1917.0,685.2 1919.9,738.6 1922.9,716.4 1925.8,666.8 1928.7,714.7 1931.7,742.5 1934.6,668.4 1937.6,726.7 1940.5,721.6 1943.4,676.9 1946.4,713.7 1949.3,740.8 1952.3,670.5 1955.2,720.2 1958.1,716.5 1961.1,665.1 1964.0,721.0 1967.0,719.6 1969.9,660.0 1972.8,729.8 1975.8,722.7 1978.7,660.2 1981.7,716.6 1984.6,730.5 1987.6,663.0 1990.5,716.7 1993.4,725.8 1996.4,667.3 1999.3,728.8 2002.3,725.5 2005.2,667.6 2008.1,736.4 2011.1,723.8 2014.0,656.9 2017.0,716.1 2019.9,721.1 2022.8,673.2 2025.8,719.7 2028.7,725.3 2031.7,671.6 2034.6,717.1 2037.5,739.9 2040.5,662.9 2043.4,737.4 2046.4,724.6 2049.3,670.1 2052.3,732.2 2055.2,721.7 2058.1,669.4 2061.1,722.5 2064.0,715.1 2067.0,675.8 2069.9,737.6 2072.8,733.2 2075.8,664.1 2078.7,732.7 2081.7,737.0 2084.6,657.7 2087.5,721.2 2090.5,729.0 2093.4,692.0 2096.4,683.6 2099.3,675.2 2102.2,666.8 2105.2,658.4 2108.1,718.1 2111.1,656.9 2114.0,715.4 2117.0,730.5 2119.9,665.7 2122.8,729.5 2125.8,737.7 2128.7,650.0 2131.7,716.4 2134.6,716.7 2137.5,661.8 2140.5,713.5 2143.4,733.4 2146.4,645.8 2149.3,726.0 2152.2,733.4 2155.2,675.0 2158.1,726.8 2161.1,723.0 2164.0,667.2 2167.0,729.2 2169.9,716.7 2172.8,653.6 2175.8,725.7 2178.7,739.1 2181.7,613.5 2184.6,715.1 2187.5,740.0 2190.5,660.7 2193.4,722.6 2196.4,732.1 2199.3,639.9 2202.2,736.4 2205.2,737.1 2208.1,667.2 2211.1,736.2 2214.0,716.7 2216.9,673.0 2219.9,733.2 2222.8,739.6 2225.8,662.1 2228.7,725.5 2231.7,722.4 2234.6,661.2 2237.5,716.3 2240.5,712.7 2243.4,600.4 2246.4,731.6 2249.3,726.8 2252.2,639.1 2255.2,736.3 2258.1,726.8 2261.1,659.0 2264.0,732.0 2266.9,732.6 2269.9,668.8 2272.8,718.8 2275.8,725.3 2278.7,661.3 2281.6,717.3 2284.6,728.9 2287.5,633.2 2290.5,713.4 2293.4,737.9 2296.4,652.2 2299.3,637.4 2302.2,736.6 2305.2,644.9 2308.1,641.0 2311.1,642.1 2314.0,640.2 2314.0,860" fill="#47cae3" fill-opacity="0.75"/></g>
<rect x="1467" y="704.5" width="847" height="2" fill="#d95f02"/>
<g font-size="22" fill="#5a5a5a" stroke="#5a5a5a" stroke-width="0.45">
<text x="1448.5" y="867.2" text-anchor="end" font-size="21" letter-spacing="-0.15">0</text>
<text x="1448.5" y="783.2" text-anchor="end" font-size="21" letter-spacing="-0.15">20</text>
<text x="1448.5" y="699.2" text-anchor="end" font-size="21" letter-spacing="-0.15">40</text>
<text x="1448.5" y="615.2" text-anchor="end" font-size="21" letter-spacing="-0.15">60</text>
<text x="1448.5" y="531.2" text-anchor="end" font-size="21" letter-spacing="-0.15">80</text>
<text x="1448.5" y="447.2" text-anchor="end" font-size="21" letter-spacing="-0.15">100</text>
<text x="1537.0" y="890.8" text-anchor="middle">19:00</text>
<text x="1643.4" y="890.8" text-anchor="middle">22:00</text>
<text x="1749.8" y="890.8" text-anchor="middle">01:00</text>
<text x="1856.2" y="890.8" text-anchor="middle">04:00</text>
<text x="1962.6" y="890.8" text-anchor="middle">07:00</text>
<text x="2068.9" y="890.8" text-anchor="middle">10:00</text>
<text x="2175.3" y="890.8" text-anchor="middle">13:00</text>
<text x="2281.7" y="890.8" text-anchor="middle">16:00</text>
<text x="1397" y="650.0" text-anchor="middle" transform="rotate(-90 1397 650.0)">Memory Utilization (%)</text>
</g>
<rect x="1429.6" y="860" width="2" height="7" fill="#e8e8e8"/><clipPath id="lc2"><rect x="1414.8" y="868" width="2.7" height="30"/><rect x="1421.8" y="868" width="60" height="30"/></clipPath><text clip-path="url(#lc2)" x="1431" y="890.8" text-anchor="middle" font-size="22" fill="#5a5a5a" stroke="#5a5a5a" stroke-width="0.45">16:..</text>
</svg>
<svg style="left:32px;top:953px" width="1296" height="637" viewBox="32 953 1296 637">
<defs><clipPath id="clip163"><rect x="163" y="1096" width="831" height="421.5"/></clipPath></defs>
<rect x="156" y="1517.5" width="838" height="2" fill="#e8e8e8"/>
<rect x="156" y="1453.9" width="838" height="2" fill="#e8e8e8"/>
<rect x="156" y="1391.2" width="838" height="2" fill="#e8e8e8"/>
<rect x="156" y="1328.6" width="838" height="2" fill="#e8e8e8"/>
<rect x="156" y="1265.9" width="838" height="2" fill="#e8e8e8"/>
<rect x="156" y="1203.3" width="838" height="2" fill="#e8e8e8"/>
<rect x="156" y="1140.7" width="838" height="2" fill="#e8e8e8"/>
<rect x="162" y="1096" width="2" height="423.5" fill="#e8e8e8"/>
<rect x="231.8" y="1519.5" width="2" height="5" fill="#e8e8e8"/>
<rect x="336.1" y="1519.5" width="2" height="5" fill="#e8e8e8"/>
<rect x="440.4" y="1519.5" width="2" height="5" fill="#e8e8e8"/>
<rect x="544.7" y="1519.5" width="2" height="5" fill="#e8e8e8"/>
<rect x="649.0" y="1519.5" width="2" height="5" fill="#e8e8e8"/>
<rect x="753.3" y="1519.5" width="2" height="5" fill="#e8e8e8"/>
<rect x="857.6" y="1519.5" width="2" height="5" fill="#e8e8e8"/>
<rect x="961.9" y="1519.5" width="2" height="5" fill="#e8e8e8"/>
<g clip-path="url(#clip163)"><polygon points="164.0,1517.5 164.0,1461.1 166.9,1509.0 169.8,1506.4 172.6,1508.6 175.5,1495.4 178.4,1509.5 181.3,1473.9 184.2,1503.9 187.1,1509.2 189.9,1505.1 192.8,1504.8 195.7,1506.8 198.6,1506.8 201.5,1504.5 204.3,1489.9 207.2,1425.1 210.1,1504.6 213.0,1493.2 215.9,1429.8 218.8,1499.4 221.6,1482.3 224.5,1506.8 227.4,1483.2 230.3,1507.6 233.2,1464.5 236.0,1507.8 238.9,1502.5 241.8,1502.3 244.7,1499.0 247.6,1509.5 250.5,1436.1 253.3,1503.4 256.2,1505.5 259.1,1503.8 262.0,1502.0 264.9,1508.2 267.8,1481.3 270.6,1502.2 273.5,1488.7 276.4,1458.0 279.3,1480.5 282.2,1507.0 285.0,1503.3 287.9,1504.3 290.8,1504.2 293.7,1504.7 296.6,1491.3 299.5,1443.9 302.3,1503.2 305.2,1476.8 308.1,1503.1 311.0,1498.6 313.9,1505.4 316.7,1490.0 319.6,1504.0 322.5,1461.9 325.4,1442.3 328.3,1508.3 331.2,1506.4 334.0,1472.0 336.9,1505.4 339.8,1505.6 342.7,1498.4 345.6,1502.9 348.4,1503.6 351.3,1504.9 354.2,1492.6 357.1,1492.8 360.0,1506.4 362.9,1451.7 365.7,1507.7 368.6,1495.5 371.5,1489.3 374.4,1497.6 377.3,1506.2 380.1,1307.7 383.0,1507.7 385.9,1504.7 388.8,1478.7 391.7,1508.5 394.6,1461.1 397.4,1506.6 400.3,1507.4 403.2,1466.2 406.1,1480.3 409.0,1486.9 411.8,1429.8 414.7,1505.2 417.6,1503.2 420.5,1505.0 423.4,1508.6 426.3,1481.0 429.1,1507.2 432.0,1464.3 434.9,1506.3 437.8,1504.6 440.7,1502.4 443.5,1478.8 446.4,1508.7 449.3,1503.6 452.2,1509.4 455.1,1504.0 458.0,1505.5 460.8,1499.0 463.7,1393.8 466.6,1506.4 469.5,1485.6 472.4,1508.3 475.2,1505.2 478.1,1505.5 481.0,1376.6 483.9,1502.5 486.8,1504.5 489.7,1456.4 492.5,1506.6 495.4,1509.2 498.3,1455.7 501.2,1504.1 504.1,1507.5 507.0,1498.9 509.8,1505.6 512.6,1505.6 515.2,-7878.5 517.8,1505.6 518.5,1507.2 521.4,1503.8 524.2,1505.5 527.1,1478.8 530.0,1414.1 532.9,1503.5 535.8,1499.8 538.7,1254.4 541.5,1508.5 544.4,1502.3 547.3,1508.8 548.8,1502.3 550.4,969.4 552.0,1502.3 553.1,1307.7 555.9,1464.1 558.8,1504.7 561.7,1507.5 564.6,1501.9 567.5,1502.8 570.4,1484.2 573.2,1482.0 576.1,1485.7 579.0,1500.3 581.9,1503.7 584.8,1505.2 587.6,1504.7 590.5,1492.5 593.4,1505.7 596.3,1506.4 599.2,1509.0 602.1,1504.4 604.9,1458.0 607.8,1482.8 610.7,1487.5 613.6,1504.9 616.5,1505.7 619.3,1505.6 622.2,1505.0 625.1,1503.4 628.0,1507.6 630.9,1503.2 633.8,1502.2 636.6,1508.7 639.5,1506.9 642.4,1478.7 645.3,1508.9 648.2,1480.9 651.0,1508.4 653.9,1507.7 656.8,1455.2 659.7,1467.4 662.6,1486.3 665.5,1506.2 668.3,1420.4 671.2,1506.0 674.1,1507.0 677.0,1472.0 679.9,1506.5 682.8,1506.7 685.6,1508.3 688.5,1502.3 691.4,1462.2 694.3,1445.5 697.2,1503.6 700.0,1502.1 702.9,1504.7 705.8,1508.5 708.7,1318.0 711.6,1504.7 714.5,1504.8 717.3,1506.5 720.2,1453.3 723.1,1507.0 726.0,1492.9 728.9,1489.6 731.7,1502.4 734.6,1504.5 737.5,1507.5 740.4,1495.3 743.3,1506.3 746.2,1507.7 749.0,1465.0 751.9,1478.9 754.8,1502.0 757.7,1508.5 760.6,1435.4 763.4,1507.0 766.3,1505.1 769.2,1509.3 772.1,1507.2 775.0,1508.8 777.9,1483.9 780.7,1502.9 783.6,1508.9 786.5,1507.1 789.4,1503.8 792.3,1503.9 795.1,1503.0 798.0,1502.6 800.9,1507.5 803.8,1503.6 806.7,1447.0 809.6,1503.2 812.4,1504.7 815.3,1463.8 818.2,1503.0 821.1,1413.5 824.0,1504.5 826.8,1481.0 829.7,1508.8 832.6,1456.4 835.5,1503.4 838.4,1496.5 841.3,1506.3 844.1,1508.8 847.0,1436.1 849.9,1502.1 852.8,1403.5 855.7,1507.9 858.5,1493.8 860.0,1507.9 862.0,-7878.5 864.0,1507.9 864.3,1499.4 867.2,1439.2 870.1,1509.6 873.0,1503.9 875.8,1477.0 878.7,1504.7 881.6,1478.9 884.0,1498.7 885.6,-7878.5 887.2,1498.7 890.2,1498.4 893.1,1505.5 896.0,1505.7 898.9,1509.3 901.8,1314.9 904.7,1504.8 907.5,1509.7 910.4,1507.2 913.3,1509.4 916.2,1502.2 917.4,1509.4 919.0,-7878.5 920.6,1509.4 922.0,1503.1 923.3,1392.2 925.0,-7878.5 926.7,1392.2 927.7,1426.7 930.6,1454.9 933.5,1479.9 936.4,1495.4 939.2,1499.1 942.1,1506.6 945.0,1504.3 946.0,1506.6 947.6,-7878.5 949.2,1506.6 950.8,1480.4 953.7,1508.8 956.5,1486.0 959.4,1498.2 959.7,1498.7 961.7,-7878.5 963.7,1498.7 965.2,1482.0 968.1,1509.2 970.9,1476.8 973.8,1492.8 976.7,1503.6 979.6,1484.1 982.5,1502.1 985.4,1354.6 988.2,577.9 991.1,577.9 994.0,577.9 994.0,1517.5" fill="#47cae3" fill-opacity="0.75"/></g>
<rect x="164" y="1449.6" width="830" height="2" fill="#d95f02"/>
<g font-size="22" fill="#5a5a5a" stroke="#5a5a5a" stroke-width="0.45">
<text x="145" y="1524.7" text-anchor="end" font-size="21" letter-spacing="-0.15">0</text>
<text x="145" y="1462.1" text-anchor="end" font-size="21" letter-spacing="-0.15">200</text>
<text x="145" y="1399.4" text-anchor="end" font-size="21" letter-spacing="-0.15">400</text>
<text x="145" y="1336.8" text-anchor="end" font-size="21" letter-spacing="-0.15">600</text>
<text x="145" y="1274.1" text-anchor="end" font-size="21" letter-spacing="-0.15">800</text>
<text x="145" y="1211.5" text-anchor="end" font-size="21" letter-spacing="-0.45">1,000</text>
<text x="145" y="1148.9" text-anchor="end" font-size="21" letter-spacing="-0.45">1,200</text>
<text x="232.8" y="1548.3" text-anchor="middle">19:00</text>
<text x="337.1" y="1548.3" text-anchor="middle">22:00</text>
<text x="441.4" y="1548.3" text-anchor="middle">01:00</text>
<text x="545.7" y="1548.3" text-anchor="middle">04:00</text>
<text x="650.0" y="1548.3" text-anchor="middle">07:00</text>
<text x="754.3" y="1548.3" text-anchor="middle">10:00</text>
<text x="858.6" y="1548.3" text-anchor="middle">13:00</text>
<text x="962.9" y="1548.3" text-anchor="middle">16:00</text>
<text x="77" y="1306.8" text-anchor="middle" transform="rotate(-90 77 1306.8)">Disk Usage (kbps)</text>
</g>
<rect x="797" y="1096" width="197" height="56" fill="#f7f7f7" stroke="#ccc" stroke-width="2"/>
</svg>
<svg style="left:1352px;top:953px" width="1296" height="637" viewBox="1352 953 1296 637">
<defs><clipPath id="clip1455"><rect x="1455" y="1096" width="859" height="421.5"/></clipPath></defs>
<rect x="1448" y="1517.5" width="857" height="2" fill="#e8e8e8"/>
<rect x="1448" y="1416.2" width="857" height="2" fill="#e8e8e8"/>
<rect x="1448" y="1316.0" width="857" height="2" fill="#e8e8e8"/>
<rect x="1448" y="1215.8" width="857" height="2" fill="#e8e8e8"/>
<rect x="1448" y="1115.5" width="857" height="2" fill="#e8e8e8"/>
<rect x="1454" y="1096" width="2" height="423.5" fill="#e8e8e8"/>
<rect x="1526.0" y="1519.5" width="2" height="5" fill="#e8e8e8"/>
<rect x="1633.8" y="1519.5" width="2" height="5" fill="#e8e8e8"/>
<rect x="1741.7" y="1519.5" width="2" height="5" fill="#e8e8e8"/>
<rect x="1849.5" y="1519.5" width="2" height="5" fill="#e8e8e8"/>
<rect x="1957.3" y="1519.5" width="2" height="5" fill="#e8e8e8"/>
<rect x="2065.2" y="1519.5" width="2" height="5" fill="#e8e8e8"/>
<rect x="2173.0" y="1519.5" width="2" height="5" fill="#e8e8e8"/>
<rect x="2280.8" y="1519.5" width="2" height="5" fill="#e8e8e8"/>
<g clip-path="url(#clip1455)"><polygon points="1456.0,1517.5 1456.0,1363.8 1459.0,1357.8 1462.0,1352.7 1464.9,1350.6 1467.9,1353.7 1470.9,1351.1 1473.9,1364.7 1476.9,1358.2 1479.8,1351.1 1482.8,1355.7 1485.8,1352.0 1488.8,1364.0 1491.8,1358.7 1494.7,1362.2 1497.7,1357.9 1500.7,1357.5 1503.7,1365.9 1506.6,1362.9 1509.6,1361.9 1512.6,1352.3 1515.6,1354.6 1518.6,1363.7 1521.5,1353.2 1524.5,1361.2 1527.5,1303.0 1530.5,1357.6 1533.5,1357.6 1536.4,1343.7 1539.4,1353.9 1542.4,1354.2 1545.4,1343.0 1548.4,1345.0 1551.3,1354.1 1554.3,1349.2 1557.3,1367.0 1560.3,1371.5 1563.2,1378.6 1566.2,1318.0 1569.2,1362.0 1572.2,1351.3 1575.2,1346.3 1578.1,1358.1 1581.1,1359.9 1584.1,1366.3 1587.1,1371.1 1590.1,1348.1 1593.0,1354.9 1596.0,1351.9 1599.0,1367.4 1602.0,1363.0 1605.0,1373.4 1607.9,1377.9 1610.9,1371.7 1613.9,1378.2 1616.9,1382.1 1619.9,1381.0 1622.8,1379.1 1625.8,1389.6 1628.8,1375.1 1631.8,1388.8 1634.8,1377.1 1637.7,1375.0 1640.7,1386.9 1643.7,1375.3 1646.7,1381.7 1649.6,1378.5 1652.6,1387.0 1655.6,1386.5 1658.6,1384.5 1661.6,1372.8 1664.5,1384.2 1667.5,1375.8 1670.5,1373.2 1673.5,1373.0 1676.5,1382.0 1679.4,1381.8 1682.4,1379.3 1685.4,1375.5 1688.4,1385.6 1691.4,1375.9 1694.3,1375.2 1697.3,1374.2 1700.3,1386.6 1703.3,1373.1 1706.2,1386.1 1709.2,1382.4 1712.2,1378.5 1715.2,1374.0 1718.2,1382.8 1721.1,1374.2 1724.1,1380.0 1727.1,1383.6 1730.1,1383.7 1733.1,1385.9 1736.0,1387.5 1739.0,1386.6 1742.0,1378.6 1745.0,1374.1 1748.0,1386.7 1750.9,1388.6 1753.9,1374.6 1756.9,1381.5 1759.9,1383.6 1762.9,1385.8 1765.8,1380.0 1768.8,1376.2 1771.8,1381.4 1774.8,1381.5 1777.8,1386.6 1780.7,1373.3 1783.7,1386.2 1786.7,1378.9 1789.7,1373.4 1792.6,1383.6 1795.6,1374.2 1798.6,1370.6 1801.6,1374.4 1804.6,1370.5 1807.5,1379.3 1810.5,1372.9 1813.5,1375.7 1816.5,1375.7 1819.0,-13520.0 1821.5,1375.7 1822.4,1370.2 1825.4,1361.9 1828.4,1364.1 1831.4,1362.1 1834.4,1369.9 1837.3,1369.4 1840.3,1365.7 1843.3,1369.7 1846.3,1372.7 1849.2,1371.2 1852.2,1375.3 1855.2,1372.0 1858.2,1363.0 1861.2,1363.6 1864.1,1368.8 1867.1,1371.0 1870.1,1373.6 1873.1,1377.6 1876.1,1375.2 1879.0,1367.8 1882.0,1366.8 1885.0,1374.7 1888.0,1368.6 1891.0,1369.1 1893.9,1370.6 1896.9,1371.4 1899.9,1370.2 1900.1,1371.4 1902.0,-13520.0 1903.9,1371.4 1905.9,1371.5 1908.8,1378.1 1911.8,1375.2 1914.8,1371.2 1917.8,1372.6 1920.8,1378.8 1923.7,1369.2 1926.7,1373.9 1929.7,1375.2 1932.7,1383.9 1935.6,1376.1 1938.6,1380.8 1941.6,1374.6 1944.6,1377.9 1947.6,1372.7 1950.5,1375.4 1953.5,1373.2 1956.5,1380.1 1959.5,1375.8 1962.5,1374.5 1965.4,1373.2 1968.4,1380.5 1971.4,1373.3 1974.4,1373.0 1977.4,1375.8 1980.3,1371.6 1983.3,1372.0 1986.3,1378.7 1989.3,1378.7 1992.2,1383.9 1995.2,1373.4 1998.2,1371.5 2001.2,1222.8 2004.2,1374.5 2007.1,1373.7 2010.1,1373.2 2013.1,1381.2 2016.1,1371.7 2019.1,1374.3 2022.0,1372.7 2025.0,1376.0 2028.0,1372.5 2031.0,1369.9 2034.0,1371.5 2036.9,1369.8 2039.9,1379.8 2042.9,1377.3 2045.9,1372.6 2048.9,1369.0 2051.8,1375.1 2054.8,1367.6 2057.8,1368.0 2060.8,1376.4 2063.8,1369.5 2066.7,1372.7 2069.7,1374.9 2072.7,1373.3 2075.7,1370.2 2078.6,1371.9 2081.6,1327.0 2084.6,1373.4 2087.6,1366.6 2090.6,1367.5 2093.5,1363.7 2096.5,1363.7 2099.5,1368.6 2102.5,1358.3 2105.5,1371.7 2108.4,1365.3 2111.4,1367.0 2114.4,1364.8 2117.4,1369.0 2120.4,1357.9 2123.3,1364.6 2126.3,1282.9 2129.3,1360.5 2132.3,1367.4 2135.2,1359.5 2138.2,1259.4 2141.2,1256.8 2144.2,1349.9 2145.4,1352.1 2147.6,-13520.0 2149.8,1352.1 2150.1,1355.9 2153.1,1351.5 2156.1,1355.5 2159.1,1361.1 2162.1,1366.0 2165.0,1360.7 2168.0,1362.7 2171.0,1358.2 2174.0,1359.6 2177.0,1302.0 2179.9,1371.8 2182.9,1216.8 2185.9,1380.1 2188.9,1380.0 2191.9,1372.7 2194.8,1370.5 2197.8,1376.1 2200.8,1367.3 2203.8,1361.9 2206.8,1367.6 2209.7,1364.5 2212.7,1365.3 2215.7,1362.0 2218.7,1349.6 2220.7,1307.0 2223.4,840.8 2226.1,1307.0 2227.6,1291.9 2230.6,1312.0 2233.6,1337.0 2236.5,1345.6 2239.5,1319.5 2242.5,1337.0 2245.5,1356.2 2248.5,1346.4 2251.4,1329.5 2254.4,1357.4 2257.4,1354.7 2260.4,1360.2 2263.4,1265.4 2266.3,1354.7 2269.3,1326.0 2272.3,1348.8 2275.3,1347.8 2278.2,1359.6 2281.2,1351.2 2284.2,1354.1 2287.2,1327.0 2290.2,1344.5 2293.1,1351.6 2296.1,1350.3 2299.1,1351.1 2302.1,1337.7 2305.1,1327.0 2308.0,1341.9 2311.0,1343.2 2314.0,1272.9 2314.0,1517.5" fill="#47cae3" fill-opacity="0.75"/></g>
<rect x="1456" y="1342.8" width="858" height="2" fill="#d95f02"/>
<g font-size="22" fill="#5a5a5a" stroke="#5a5a5a" stroke-width="0.45">
<text x="1438" y="1524.7" text-anchor="end" font-size="21" letter-spacing="-0.15">0</text>
<text x="1438" y="1424.5" text-anchor="end" font-size="21" letter-spacing="-0.15">20</text>
<text x="1438" y="1324.2" text-anchor="end" font-size="21" letter-spacing="-0.15">40</text>
<text x="1438" y="1224.0" text-anchor="end" font-size="21" letter-spacing="-0.15">60</text>
<text x="1438" y="1123.7" text-anchor="end" font-size="21" letter-spacing="-0.15">80</text>
<text x="1527.0" y="1548.3" text-anchor="middle">19:00</text>
<text x="1634.8" y="1548.3" text-anchor="middle">22:00</text>
<text x="1742.7" y="1548.3" text-anchor="middle">01:00</text>
<text x="1850.5" y="1548.3" text-anchor="middle">04:00</text>
<text x="1958.3" y="1548.3" text-anchor="middle">07:00</text>
<text x="2066.2" y="1548.3" text-anchor="middle">10:00</text>
<text x="2174.0" y="1548.3" text-anchor="middle">13:00</text>
<text x="2281.8" y="1548.3" text-anchor="middle">16:00</text>
<text x="1399" y="1306.8" text-anchor="middle" transform="rotate(-90 1399 1306.8)">Network Usage (kbps)</text>
</g>
<rect x="2117" y="1096" width="197" height="56" fill="#f7f7f7" stroke="#ccc" stroke-width="2"/>
</svg>
<span class="t " style="left:815.47px;top:1110px;font-size:28px;line-height:28px;color:#000;-webkit-text-stroke:0.3px #000;transform:scaleX(1.0138);">Reset Zoom</span>
<span class="t " style="left:2135.47px;top:1110px;font-size:28px;line-height:28px;color:#000;-webkit-text-stroke:0.3px #000;transform:scaleX(1.0138);">Reset Zoom</span>
</div>
</body></html>
